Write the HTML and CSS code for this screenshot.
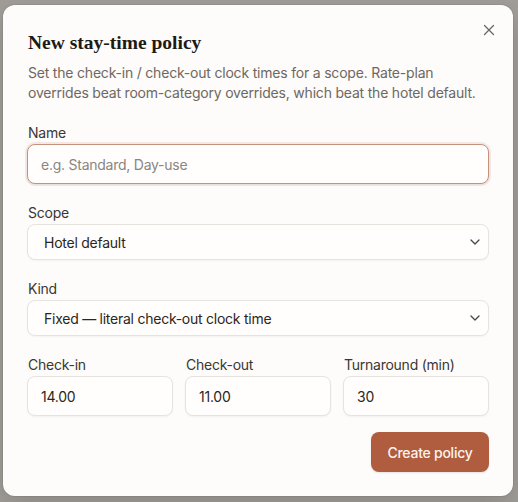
FILE: index.html
```html
<!DOCTYPE html>
<html lang="en">
<head>
<meta charset="utf-8">
<title>New stay-time policy</title>
<link rel="stylesheet" href="styles.css">
</head>
<body>
<div class="backdrop">
  <div class="dialog" role="dialog" aria-labelledby="dlg-title">
    <button class="close" aria-label="Close">
      <svg width="12" height="12" viewBox="0 0 12 12"><path d="M1.5 1.5 L10.5 10.5 M10.5 1.5 L1.5 10.5" stroke="#6b6661" stroke-width="1.3" stroke-linecap="round" fill="none"/></svg>
    </button>
    <h2 id="dlg-title" class="title">New stay-time policy</h2>
    <p class="desc">Set the check-in / check-out clock times for a scope. Rate-plan overrides beat room-category overrides, which beat the hotel default.</p>

    <form class="form">
      <div class="field">
        <label class="label" for="name">Name</label>
        <input id="name" class="input focused" type="text" placeholder="e.g. Standard, Day-use">
      </div>
      <div class="field">
        <label class="label" for="scope">Scope</label>
        <div class="select">
          <span>Hotel default</span>
          <svg class="chev" width="10" height="6" viewBox="0 0 10 6"><path d="M1 1 L5 5 L9 1" stroke="#4a4540" stroke-width="1.3" fill="none" stroke-linecap="round" stroke-linejoin="round"/></svg>
        </div>
      </div>
      <div class="field">
        <label class="label" for="kind">Kind</label>
        <div class="select">
          <span>Fixed — literal check-out clock time</span>
          <svg class="chev" width="10" height="6" viewBox="0 0 10 6"><path d="M1 1 L5 5 L9 1" stroke="#4a4540" stroke-width="1.3" fill="none" stroke-linecap="round" stroke-linejoin="round"/></svg>
        </div>
      </div>
      <div class="row">
        <div class="field">
          <label class="label">Check-in</label>
          <input class="input" type="text" value="14.00">
        </div>
        <div class="field">
          <label class="label">Check-out</label>
          <input class="input" type="text" value="11.00">
        </div>
        <div class="field">
          <label class="label">Turnaround (min)</label>
          <input class="input" type="text" value="30">
        </div>
      </div>
      <div class="actions">
        <button type="button" class="primary">Create policy</button>
      </div>
    </form>
  </div>
</div>
</body>
</html>
```

FILE: styles.css
```css
* { box-sizing: border-box; }
html, body { margin: 0; padding: 0; }
body {
  background: #a19e99;
  font-family: Inter, "Liberation Sans", sans-serif;
  letter-spacing: -0.25px;
  width: 518px;
  height: 502px;
  overflow: hidden;
}
.backdrop {
  padding: 5px 5px 5px 3px;
}
.dialog {
  position: relative;
  width: 510px;
  background: #fdfcfa;
  border-radius: 12px;
  padding: 24px;
  box-shadow: 0 0 0 1px rgba(0,0,0,0.06), 0 10px 30px rgba(0,0,0,0.15);
}
.close {
  position: absolute;
  top: 18px;
  right: 17px;
  width: 14px;
  height: 14px;
  padding: 1px;
  border: 0;
  background: none;
  display: flex;
  align-items: center;
  justify-content: center;
}
.title {
  margin: 0;
  font-family: "Liberation Serif", "DejaVu Serif", serif;
  font-weight: 700;
  font-size: 19.5px;
  line-height: 28px;
  letter-spacing: 0;
  color: #1d1915;
  padding-left: 1px;
}
.desc {
  margin: 6px -6px 0 0;
  font-size: 14px;
  line-height: 20px;
  letter-spacing: -0.2px;
  color: #6e6862;
  padding-left: 1px;
}
.form {
  margin-top: 21px;
  display: flex;
  flex-direction: column;
  gap: 20px;
}
.field {
  display: flex;
  flex-direction: column;
  gap: 2px;
  min-width: 0;
}
.label {
  font-size: 14px;
  line-height: 18px;
  color: #3b3733;
  padding-left: 1px;
}
.input {
  height: 40px;
  width: 100%;
  border: 1px solid #e7e3de;
  border-radius: 8px;
  background: #fffefd;
  padding: 0 13px;
  font-family: inherit;
  letter-spacing: inherit;
  font-size: 14px;
  color: #2a2622;
  box-shadow: 0 1px 2px rgba(0,0,0,0.05);
  outline: none;
}
.input::placeholder { color: #8b857f; }
.input.focused {
  border-color: #c4917d;
  box-shadow: 0 0 0 2px rgba(176, 92, 62, 0.12), 0 1px 2px rgba(0,0,0,0.05);
}
.select {
  height: 36px;
  border: 1px solid #e7e3de;
  border-radius: 8px;
  background: #fffefd;
  padding: 0 8px 0 16px;
  display: flex;
  align-items: center;
  justify-content: space-between;
  font-size: 14px;
  color: #2a2622;
  box-shadow: 0 1px 2px rgba(0,0,0,0.04);
}
.chev { flex: none; }
.row {
  display: grid;
  grid-template-columns: repeat(3, 1fr);
  gap: 12px;
}
.actions {
  display: flex;
  justify-content: flex-end;
  margin-top: -4px;
}
.primary {
  height: 40px;
  width: 118px;
  border: 0;
  border-radius: 8px;
  background: #b05c3e;
  color: #fbf3ee;
  font-family: inherit;
  letter-spacing: inherit;
  font-size: 14px;
  font-weight: 500;
  box-shadow: 0 1px 2px rgba(0,0,0,0.1);
}
```
